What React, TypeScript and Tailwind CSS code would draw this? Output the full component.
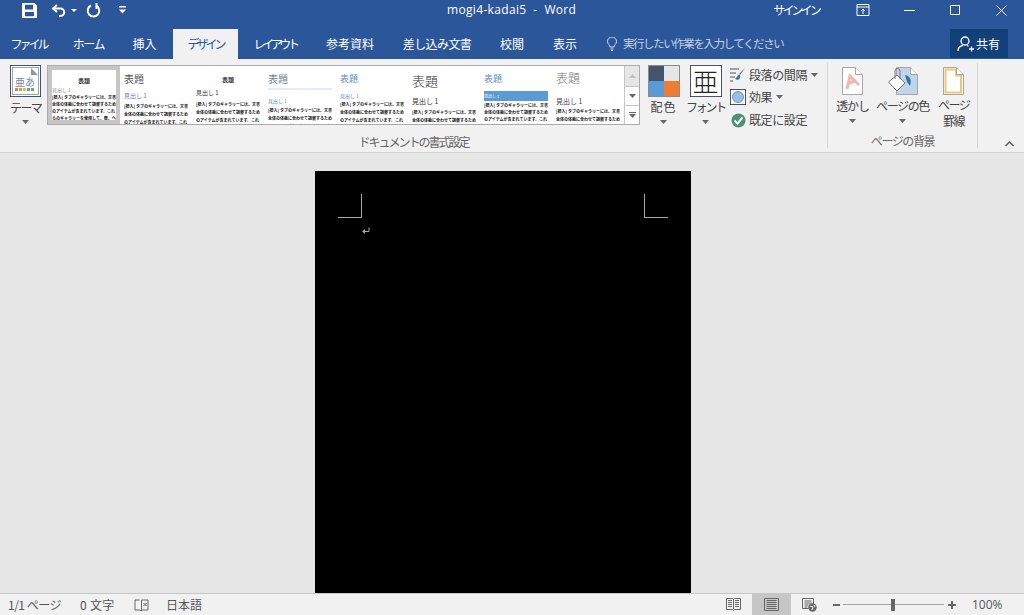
const JP = "font-['Noto_Sans_CJK_JP','Noto_Sans',sans-serif]";

const TABS = [
  { label: "ファイル", w: "w-[57px]", track: "tracking-[-3px]" },
  { label: "ホーム", w: "w-[63px]", track: "tracking-[-1.4px]" },
  { label: "挿入", w: "w-[53px]", track: "tracking-[0px] pr-[4px]" },
  { label: "デザイン", w: "w-[65px]", active: true, track: "tracking-[-3px]" },
  { label: "レイアウト", w: "w-[74px]", track: "tracking-[-3.400px]" },
  { label: "参考資料", w: "w-[76px]", track: "tracking-[0px]" },
  { label: "差し込み文書", w: "w-[98px]", track: "tracking-[-0.6px]" },
  { label: "校閲", w: "w-[52px]", track: "tracking-[0px]" },
  { label: "表示", w: "w-[54px]", track: "tracking-[0px]" },
];

const BODY =
  "[標入] タブのギャラリーには、文書全体の体裁に合わせて調整するためのアイテムが含まれています。これらのギャラリーを使用して、表、ヘッダー、フッター、リスト、表紙などを挿入できます。";

const THEMES = [
  {
    title: "text-[6px] leading-[10px] text-center text-[#333] font-bold pt-[10px]",
    head: "text-[5px] leading-[8px] text-[#888] bg-white",
    body: "text-[4px] leading-[7px] text-[#111] font-bold",
    selected: true,
  },
  {
    title: "text-[10px] leading-[16px] text-[#555] pt-[5px]",
    head: "text-[6px] leading-[10px] text-[#5b83c4] mt-[4px]",
    body: "text-[4px] leading-[8px] text-[#111] font-bold mt-[1px]",
  },
  {
    title: "text-[6px] leading-[10px] text-center text-[#333] font-bold pt-[9px]",
    head: "text-[6px] leading-[10px] text-[#333] mt-[3px]",
    body: "text-[4px] leading-[8px] text-[#111] font-bold mt-[2px]",
  },
  {
    title: "text-[10px] leading-[15px] text-[#6b7f99] pt-[5px] pb-[2px] border-b-2 border-[#e4ecf6]",
    head: "text-[5px] leading-[9px] text-[#5b83c4] mt-[6px]",
    body: "text-[4px] leading-[8px] text-[#111] font-bold mt-[1px]",
  },
  {
    title: "text-[9px] leading-[14px] text-[#5b8fc9] pt-[6px]",
    head: "text-[5px] leading-[9px] text-[#5b83c4] mt-[5px]",
    body: "text-[4px] leading-[8px] text-[#111] font-bold",
  },
  {
    title: "text-[13px] leading-[18px] text-[#333] font-light pt-[6px]",
    head: "text-[7px] leading-[10px] text-[#333] mt-[6px]",
    body: "text-[4px] leading-[8px] text-[#111] font-bold mt-[2px]",
  },
  {
    title: "text-[9px] leading-[14px] text-[#5b8fc9] pt-[6px]",
    head: "text-[4px] leading-[10px] text-white bg-[#5b9bd5] mt-[5px]",
    body: "text-[4px] leading-[7px] text-[#111] font-bold mt-[1px]",
  },
  {
    title: "text-[12px] leading-[17px] text-[#777] font-light pt-[3px]",
    head: "text-[7px] leading-[10px] text-[#444] mt-[10px]",
    body: "text-[4px] leading-[8px] text-[#111] font-bold mt-[1px]",
  },
];

function Caret({ className = "" }: { className?: string }) {
  return (
    <svg width="7" height="4" viewBox="0 0 7 4" className={className}>
      <path d="M0 0h7L3.500 4z" fill="#666" />
    </svg>
  );
}

function SaveIcon() {
  return (
    <svg width="15" height="15" viewBox="0 0 15 15">
      <path
        d="M0 0h12.500L15 2.500V15H0zM3 1.800v4.700h8V1.800zM3 9v4.200h9V9z"
        fill="#fff"
        fillRule="evenodd"
      />
    </svg>
  );
}

function UndoIcon() {
  return (
    <svg width="15" height="13" viewBox="0 0 15 13" fill="none" stroke="#fff" strokeWidth="2">
      <path d="M6 1 2 4.500 6 8" />
      <path d="M2 4.500h7.500a3.500 3.500 0 0 1 0 7.500H8" />
    </svg>
  );
}

function RedoIcon() {
  return (
    <svg width="15" height="15" viewBox="0 0 15 15" fill="none" stroke="#fff" strokeWidth="2">
      <path d="M5 2.500a5.800 5.800 0 1 0 5 0" />
      <path d="M10.500 0v5h-1" strokeWidth="2" />
    </svg>
  );
}

function QatMenuIcon() {
  return (
    <svg width="7" height="8" viewBox="0 0 7 8">
      <path d="M0 0h7v1.400H0zM0 3.500h7L3.500 7.500z" fill="#fff" />
    </svg>
  );
}

function WindowControls() {
  return (
    <div className="flex items-center">
      <svg width="16" height="12" viewBox="0 0 16 12" fill="none" stroke="#fff" className="ml-[35px]">
        <path d="M.5.500h12v11H.5zM.5 3h12M6.500 10V5M4.500 7l2-2 2 2" transform="translate(1.500 0)" />
      </svg>
      <svg width="11" height="1" viewBox="0 0 11 1" className="ml-[33px]">
        <path d="M0 .5h11" stroke="#fff" />
      </svg>
      <svg width="10" height="10" viewBox="0 0 10 10" fill="none" className="ml-[35px]">
        <path d="M.5.500h9v9h-9z" stroke="#fff" />
      </svg>
      <svg width="11" height="11" viewBox="0 0 11 11" fill="none" className="ml-[36px]">
        <path d="M.5.500l10 10M10.500.500l-10 10" stroke="#fff" />
      </svg>
    </div>
  );
}

function TitleBar() {
  return (
    <div className="h-[29px] pb-[9px] grid grid-cols-[447px_auto_1fr] items-center text-white">
      <div className="flex items-center pl-[22px]">
        <SaveIcon />
        <span className="ml-[14px] flex items-center">
          <UndoIcon />
        </span>
        <svg width="6" height="3" viewBox="0 0 6 3" className="ml-[5px]">
          <path d="M0 0h6L3 3z" fill="#fff" />
        </svg>
        <span className="ml-[9px] flex">
          <RedoIcon />
        </span>
        <span className="ml-[18px] flex">
          <QatMenuIcon />
        </span>
      </div>
      <div className="text-[12px] tracking-[0.33px] font-['Open_Sans',sans-serif] whitespace-pre">mogi4-kadai5  -  Word</div>
      <div className="flex items-center pl-[197px]">
        <span className={`${JP} text-[12px] tracking-[-2.900px] w-[47px] whitespace-nowrap`}>サインイン</span>
        <WindowControls />
      </div>
    </div>
  );
}

function TabBar() {
  return (
    <div className={`${JP} h-[30px] flex items-stretch text-[12px] text-white`}>
      {TABS.map((t) => (
        <div
          key={t.label}
          className={`${t.w} ${t.track} flex items-center justify-center whitespace-nowrap ${
            t.active ? "bg-[#f1f1f1] text-[#2b579a]" : ""
          }`}
        >
          {t.label}
        </div>
      ))}
      <div className="ml-[15px] flex items-center text-[#c3d0e3]">
        <svg width="10" height="14" viewBox="0 0 10 14" fill="none" stroke="#d5deeb">
          <path d="M3 10c0-2-2.500-3-2.500-5.500a4.500 4.500 0 0 1 9 0C9.500 7 7 8 7 10zM3.500 12h3M4 13.500h2" />
        </svg>
        <span className="ml-[6px] w-[161px] whitespace-nowrap text-[11.5px] tracking-[-1.440px]">実行したい作業を入力してください</span>
      </div>
      <div className="ml-[166px] w-[58px] h-[29px] bg-[#124078] flex items-center pl-[7px]">
        <svg width="18" height="16" viewBox="0 0 18 16" fill="none" stroke="#fff" strokeWidth="1.300">
          <circle cx="8" cy="5" r="4" />
          <path d="M1 15c0-3 2-5 5-5.500M10 9.500l1.500.8M12 13h5M14.500 10.500v5" />
        </svg>
        <span className="ml-[1px]">共有</span>
      </div>
    </div>
  );
}

function ThemeThumb({ t }: { t: (typeof THEMES)[number] }) {
  return (
    <div className={`w-[72px] h-[58px] shrink-0 overflow-hidden ${t.selected ? "border-4 border-[#c6c6c6]" : "px-1"}`}>
      <div className={`${t.title} ${t.selected ? "-mt-[4px]" : ""}`}>表題</div>
      <div className={`${t.head} whitespace-nowrap`}>見出し 1</div>
      <div className={t.body}>{BODY}</div>
    </div>
  );
}

function Gallery() {
  return (
    <div className="ml-[6px] mt-[6px] w-[593px] h-[60px] flex border border-[#ababab] bg-white">
      <div className="flex-1 flex overflow-hidden">
        {THEMES.map((t, i) => (
          <ThemeThumb key={i} t={t} />
        ))}
      </div>
      <div className="w-[15px] flex flex-col border-l border-[#c6c6c6] bg-white">
        <div className="h-[21px] bg-[#e6e6e6] flex items-center justify-center border-b border-[#c6c6c6]">
          <svg width="7" height="4" viewBox="0 0 7 4">
            <path d="M3.500 0 7 4H0z" fill="#c0c0c0" />
          </svg>
        </div>
        <div className="h-[19px] flex items-center justify-center border-b border-[#c6c6c6]">
          <Caret />
        </div>
        <div className="flex-1 flex flex-col items-center justify-center gap-[1px]">
          <div className="w-[7px] h-px bg-[#666]" />
          <Caret />
        </div>
      </div>
    </div>
  );
}

function ThemeButton() {
  return (
    <div className="w-[41px] pl-[10px] pt-[6px] flex flex-col">
      <div className="w-[31px] h-[32px] border border-[#44546a] p-[1px] bg-white">
        <div className="relative h-full bg-white border border-[#9aa5b5] overflow-hidden">
          <div className={`${JP} text-[10px] leading-[11px] text-[#7d8a9c] pt-[8px] pl-[2px] whitespace-nowrap`}>亜あ</div>
          <div className="flex gap-[1px] pl-[2px] mt-[1px]">
            <span className="w-[3px] h-[3px] bg-[#ed7d31]" />
            <span className="w-[3px] h-[3px] bg-[#a5a5a5]" />
            <span className="w-[3px] h-[3px] bg-[#ffc000]" />
            <span className="w-[3px] h-[3px] bg-[#5b9bd5]" />
            <span className="w-[3px] h-[3px] bg-[#70ad47]" />
          </div>
          <svg width="7" height="7" viewBox="0 0 7 7" className="absolute top-0 right-0">
            <path d="M0 0h7v7z" fill="#fff" />
            <path d="M0 0l7 7H0z" fill="#8b97a8" />
          </svg>
        </div>
      </div>
      <div className="w-[31px] mt-[2px] text-center text-[12px] leading-[18px] whitespace-nowrap tracking-[-1.600px]">テーマ</div>
      <div className="w-[31px] flex justify-center mt-[3px]">
        <Caret />
      </div>
    </div>
  );
}

function ColorsButton() {
  return (
    <div className="ml-[7px] w-[33px] pt-[6px] flex flex-col items-center">
      <div className="w-[32px] h-[32px] border border-[#8b8b8b] grid grid-cols-2 grid-rows-2">
        <span className="bg-[#44546a]" />
        <span className="bg-[#e7e6e6]" />
        <span className="bg-[#5b9bd5]" />
        <span className="bg-[#ed7d31]" />
      </div>
      <div className="mt-[1px] text-[12px] leading-[18px] whitespace-nowrap tracking-[1px]">配色</div>
      <div className="mt-[4px] flex">
        <Caret />
      </div>
    </div>
  );
}

function FontsButton() {
  return (
    <div className="ml-[9px] w-[33px] pt-[6px] flex flex-col items-center">
      <div className="w-[32px] h-[32px] border border-[#44546a] bg-white flex items-center justify-center text-[26px] leading-[30px] font-extralight text-[#222] overflow-hidden">
        亜
      </div>
      <div className="mt-[1px] text-[12px] leading-[18px] whitespace-nowrap tracking-[-2.200px]">フォント</div>
      <div className="mt-[4px] flex">
        <Caret />
      </div>
    </div>
  );
}

function SmallButtons() {
  return (
    <div className="ml-[8px] pt-[5px] flex flex-col text-[12px] leading-[22px] whitespace-nowrap tracking-[-0.4px]">
      <div className="h-[22px] flex items-center">
        <svg width="16" height="16" viewBox="0 0 16 16" fill="none">
          <path d="M0 2h9M0 6h6M0 10h5M0 14h3" stroke="#555" />
          <path d="M15 1 9 7l1 1z" fill="#666" />
          <path d="M9 8c-2 0-2 3-4 4 3 2 6 0 5-4z" fill="#2e75b6" />
        </svg>
        <span className="ml-[3px]">段落の間隔</span>
        <Caret className="ml-[4px]" />
      </div>
      <div className="h-[22px] flex items-center">
        <span className="w-[16px] h-[16px] border border-[#44546a] bg-white flex items-center justify-center">
          <span className="w-[12px] h-[12px] rounded-full bg-[#9dbce8] border border-[#6f94c9]" />
        </span>
        <span className="ml-[3px]">効果</span>
        <Caret className="ml-[4px]" />
      </div>
      <div className="h-[24px] flex items-center">
        <svg width="15" height="15" viewBox="0 0 15 15" className="ml-[1px]">
          <circle cx="7.500" cy="7.500" r="7" fill="#4c9178" />
          <path d="M3.500 7.500 6.500 10.500 11.500 4.500" fill="none" stroke="#fff" strokeWidth="2" />
        </svg>
        <span className="ml-[3px]">既定に設定</span>
      </div>
    </div>
  );
}

function PageIcon({ children }: { children?: React.ReactNode }) {
  return (
    <svg width="21" height="28" viewBox="0 0 21 28" fill="none">
      <path d="M.5.500h13l7 7v20H.5z" fill="#fff" stroke="#a6a6a6" />
      {children}
      <path d="M13.500.500v7h7" fill="#fff" stroke="#a6a6a6" />
    </svg>
  );
}

function BackgroundGroup() {
  return (
    <div className="w-[150px] border-r border-[#d5d5d5] my-[4px] flex flex-col items-center">
      <div className="flex-1 w-full flex pl-[9px] pt-[4px] text-[12px] leading-[18px] whitespace-nowrap">
        <div className="w-[31px] flex flex-col items-center tracking-[-1.200px]">
          <PageIcon>
            <path d="M5 22 8 9l9 9M5.500 17l7-3" stroke="#f0b8ac" strokeWidth="3" />
          </PageIcon>
          <div className="mt-[2px]">透かし</div>
          <div className="mt-[4px] flex">
            <Caret />
          </div>
        </div>
        <div className="ml-[8px] w-[53px] flex flex-col items-center tracking-[-1.400px]">
          <svg width="30" height="28" viewBox="0 0 30 28" fill="none">
            <path d="M8.500.500h14l7 7v20h-21z" fill="#c1d5ea" stroke="#a6a6a6" />
            <path d="M22.500.500v7h7" fill="#fff" stroke="#a6a6a6" />
            <path d="M.500 15 9 8l8 8-8 8z" fill="#fff" stroke="#777" />
            <path d="M7 12V4a2.500 2.500 0 0 1 5 0v8" stroke="#777" />
            <path d="M17 8c5 1 7 5 5 11l-3-4z" fill="#2e75b6" />
          </svg>
          <div className="mt-[2px]">ページの色</div>
          <div className="mt-[4px] flex">
            <Caret />
          </div>
        </div>
        <div className="ml-[9px] w-[31px] flex flex-col items-center tracking-[-1.500px]">
          <PageIcon>
            <path d="M2.500 2.500h10.500v6h5v17H2.500z" stroke="#f0c777" strokeWidth="2" />
          </PageIcon>
          <div className="mt-[2px] text-center leading-[16px]">
            ページ
            <br />
            罫線
          </div>
        </div>
      </div>
      <div className="text-[12px] leading-[16px] text-[#666] tracking-[-1.400px] -mb-[1px]">ページの背景</div>
    </div>
  );
}

function Ribbon() {
  return (
    <div className={`${JP} h-[94px] flex bg-[#f1f1f1] border-b border-[#d2d2d2] text-[#444]`}>
      <div className="w-[828px] border-r border-[#d5d5d5] my-[4px] flex flex-col">
        <div className="flex-1 flex -mt-[4px]">
          <ThemeButton />
          <Gallery />
          <ColorsButton />
          <FontsButton />
          <SmallButtons />
        </div>
        <div className="text-center text-[12px] leading-[16px] text-[#666] tracking-[-2px] -mb-[2px]">
          ドキュメントの書式設定
        </div>
      </div>
      <BackgroundGroup />
      <div className="flex-1 flex justify-end items-end pb-[5px] pr-[10px]">
        <svg width="9" height="6" viewBox="0 0 9 6" fill="none">
          <path d="M.5 5 4.500 1l4 4" stroke="#666" strokeWidth="1.600" />
        </svg>
      </div>
    </div>
  );
}

function Page() {
  return (
    <div className="flex-1 bg-[#e6e6e6] overflow-hidden flex justify-center pt-[18px] pr-[18px]">
      <div className="w-[376px] h-[792px] bg-black shrink-0 px-[23px] pt-[23px]">
        <div className="flex justify-between">
          <div className="w-[24px] h-[24px] border-r border-b border-[#a6a6a6]" />
          <div className="w-[24px] h-[24px] border-l border-b border-[#a6a6a6]" />
        </div>
        <svg width="8" height="8" viewBox="0 0 8 8" fill="none" className="ml-[24px] mt-[9px]">
          <path d="M7 .5v4H1" stroke="#a6a6a6" />
          <path d="M0 4.500 3 2v5z" fill="#a6a6a6" />
        </svg>
      </div>
    </div>
  );
}

function StatusBar() {
  return (
    <div className={`${JP} h-[22px] flex items-center bg-[#f1f1f1] border-t border-[#c6c6c6] text-[12px] text-[#555] whitespace-nowrap`}>
      <span className="ml-[8px] w-[52px] tracking-[-0.5px]">1/1 ページ</span>
      <span className="ml-[20px] w-[35px] tracking-[0.3px]">0 文字</span>
      <svg width="15" height="14" viewBox="0 0 15 14" fill="none" stroke="#666" className="ml-[19px]">
        <path d="M5.500 2H1v10h5l1.500 1V2M7.500 2H14v10H7.500M9.500 5l3 3M12.500 5l-3 3" />
      </svg>
      <span className="ml-[17px] w-[36px]">日本語</span>
      <div className="flex-1" />
      <svg width="15" height="13" viewBox="0 0 15 13" fill="none" stroke="#666">
        <path d="M.5.500h6l1 1 1-1h6v11h-6l-1 1-1-1h-6zM7.500 1.500v10M2 2.500h4M2 4.500h4M2 6.500h4M2 8.500h4M9 2.500h4M9 4.500h4M9 6.500h4M9 8.500h4" />
      </svg>
      <div className="ml-[11px] w-[39px] h-[21px] bg-[#c6c6c6] flex items-center justify-center">
        <svg width="15" height="13" viewBox="0 0 15 13" fill="none" stroke="#666">
          <path d="M.5.500h14v12H.5zM2.500 2.500h10M2.500 4.500h10M2.500 6.500h10M2.500 8.500h10M2.500 10.500h10" />
        </svg>
      </div>
      <svg width="15" height="14" viewBox="0 0 15 14" fill="none" className="ml-[11px]">
        <path d="M.5.500h11v8M.5.500v10h6M2.500 3h7M2.500 5h7M2.500 7h4M2.500 9h3" stroke="#666" />
        <circle cx="10.500" cy="9.500" r="4.200" fill="#666" />
        <path d="M8 8l3 1-1 3M12 7l1 2" stroke="#fff" />
      </svg>
      <div className="ml-[16px] w-[7px] h-[2px] bg-[#666]" />
      <div className="ml-[3px] w-[101px] h-[11px] flex items-center">
        <div className="w-[48px] h-px bg-[#a6a6a6]" />
        <div className="w-[4px] h-[12px] bg-[#666]" />
        <div className="flex-1 h-px bg-[#a6a6a6]" />
      </div>
      <svg width="8" height="8" viewBox="0 0 8 8" className="ml-[4px]">
        <path d="M3 0h2v3h3v2H5v3H3V5H0V3h3z" fill="#666" />
      </svg>
      <span className="ml-[16px] mr-[20px] w-[32px] font-['Open_Sans',sans-serif]">100%</span>
    </div>
  );
}

export default function App() {
  return (
    <div className="w-[1024px] h-[615px] flex flex-col overflow-hidden bg-[#2b579a]">
      <TitleBar />
      <TabBar />
      <Ribbon />
      <Page />
      <StatusBar />
    </div>
  );
}
